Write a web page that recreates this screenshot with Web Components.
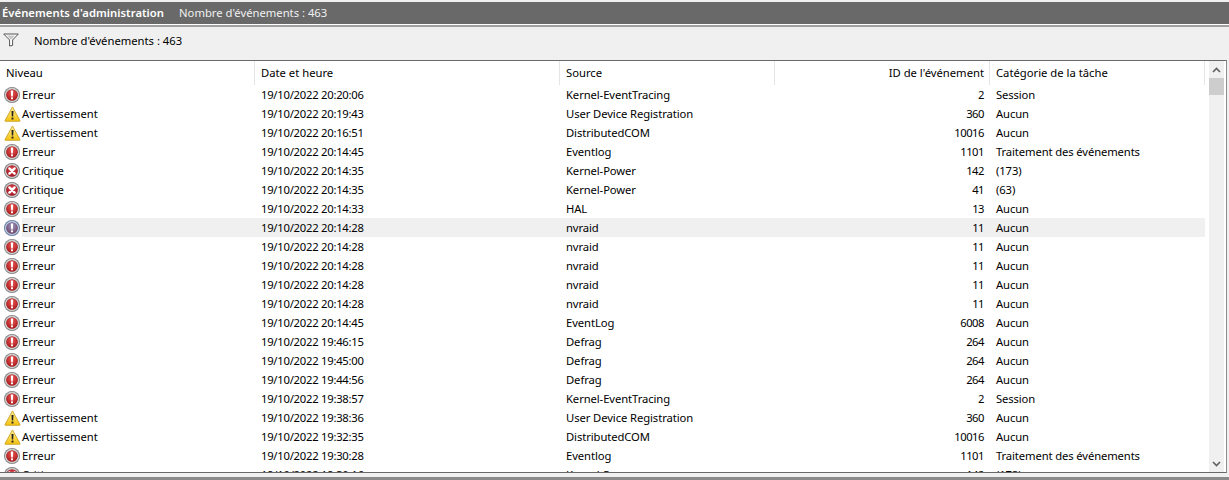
<!DOCTYPE html>
<html lang="fr"><head><meta charset="utf-8"><title>Événements d'administration</title>
<style>
html,body{margin:0;padding:0;height:480px;overflow:hidden;background:#f0f0f0}
body{font:11.25px/16px "Noto Sans","Open Sans",sans-serif;color:#000}
</style></head><body>
<ev-app></ev-app>
<script>
const body=(c1,c2,c3,c4)=>`<circle cx="8" cy="8" r="8" fill="${c1}"/><circle cx="8" cy="8" r="7.2" fill="${c2}"/><circle cx="8" cy="8" r="5.6" fill="${c3}"/><circle cx="8" cy="8" r="5.6" fill="${c4}"/>`;
const ICONS={
E:`<svg viewBox="0 0 16 16" width="16" height="16"><defs><radialGradient id="r" cx=".5" cy=".35" r=".7"><stop offset="0" stop-color="#ec5a58"/><stop offset="1" stop-color="#a51216"/></radialGradient></defs>${body("#7f7f7f","#cfcfcf","#8a1114","url(#r)")}<path d="M6.8 3.5h2.4l-.4 5.9H7.2z" fill="#fff"/><rect x="7" y="10.3" width="2" height="2" rx=".6" fill="#fff"/></svg>`,
S:`<svg viewBox="0 0 16 16" width="16" height="16"><defs><radialGradient id="s" cx=".5" cy=".35" r=".7"><stop offset="0" stop-color="#9a9ac0"/><stop offset="1" stop-color="#6f3f62"/></radialGradient></defs>${body("#64779b","#b6c5de","#5a3a60","url(#s)")}<path d="M6.8 3.5h2.4l-.4 5.9H7.2z" fill="#fff"/><rect x="7" y="10.3" width="2" height="2" rx=".6" fill="#fff"/></svg>`,
C:`<svg viewBox="0 0 16 16" width="16" height="16"><defs><radialGradient id="c" cx=".5" cy=".35" r=".7"><stop offset="0" stop-color="#dc444b"/><stop offset="1" stop-color="#9c1420"/></radialGradient></defs>${body("#7a7a7a","#c9c9c9","#8a1114","url(#c)")}<path d="M5.4 5.4 10.6 10.6M10.6 5.4 5.4 10.6" stroke="#fff" stroke-width="2.4" stroke-linecap="round"/></svg>`,
W:`<svg viewBox="0 0 16 16" width="17" height="16"><defs><linearGradient id="w" x1="0" y1="0" x2="0" y2="1"><stop offset="0" stop-color="#fff09a"/><stop offset="1" stop-color="#f3c20f"/></linearGradient></defs><path d="M8 .9 15.5 14.6Q15.6 15.3 15 15.3H1Q.4 15.3.5 14.6Z" fill="url(#w)" stroke="#c59a18" stroke-width=".8" stroke-linejoin="round"/><path d="M7 5h2l-.3 5.6H7.3z" fill="#222"/><rect x="7.05" y="11.6" width="1.9" height="1.9" fill="#222"/></svg>`
};
const def=(n,css,html)=>{class K extends HTMLElement{connectedCallback(){if(this.shadowRoot)return;const r=this.attachShadow({mode:"open"});r.innerHTML=`<style>${css}</style>`+(typeof html==="function"?html(this):html);}}customElements.define(n,K);};

def("ev-titlebar",`:host{display:flex;align-items:center;height:22px;margin-top:2px;background:#696969;color:#fff;white-space:nowrap;padding-left:2px}
b{font-weight:600;color:#fff;margin-right:15px;letter-spacing:.04px}span{color:#f0f0f0}`,
`<b><slot name="title"></slot></b><span><slot name="count"></slot></span>`);

def("ev-toolbar",`:host{display:flex;align-items:flex-start;height:33px;box-sizing:border-box;background:#f0f0f0;padding:6px 0 0 3px;gap:15px;white-space:nowrap}
svg{display:block;margin-top:0}span{line-height:16px}`,
`<svg width="16" height="14" viewBox="0 0 16 14"><path d="M.7 1h14.6L9.6 7v5.4L6.6 13V7z" fill="#fff" stroke="#555" stroke-width="1" stroke-linejoin="round"/><path d="M4 2.4h8L8.9 6.2H7.2z" fill="#c9c9c9"/></svg><span><slot></slot></span>`);

def("ev-icon",`:host{display:block;width:18px;height:16px;flex:none}svg{display:block}`,h=>ICONS[h.getAttribute("kind")]);

const cols="grid-template-columns:255px 305px 215px 215px 215px;";
def("ev-head",`:host{display:grid;${cols}height:24px;flex:none;background:#fff}
div{padding:4px 6px 0;border-right:1px solid #e5e5e5;box-sizing:border-box;white-space:nowrap;height:24px}
.r{text-align:right;padding-right:5px}`,
`<div>Niveau</div><div>Date et heure</div><div>Source</div><div class="r">ID de l'événement</div><div>Catégorie de la tâche</div>`);

def("ev-row",`:host{display:grid;${cols}height:19px;flex:none;white-space:nowrap;line-height:19px}
.c{padding-left:6px;overflow:hidden}
.l{display:flex;align-items:center;padding-left:4px}
.l span{flex:1;height:19px}
.d{letter-spacing:-.25px}
.s{letter-spacing:-.09px}
.t{letter-spacing:-.12px}
.r{text-align:right;padding-right:6px;letter-spacing:-.5px}
:host([sel]) .c:not(.l),:host([sel]) .l span{background:#f0f0f0}`,
h=>{const a=h.dataset;const names={E:"Erreur",S:"Erreur",W:"Avertissement",C:"Critique"};
return `<div class="c l"><ev-icon kind="${a.k}"></ev-icon><span>${names[a.k]}</span></div><div class="c d">${a.d}</div><div class="c s">${a.s}</div><div class="c r">${a.i}</div><div class="c t">${a.t}</div>`});

def("ev-scroll",`:host{display:flex;flex-direction:column;width:15px;flex:none;background:#f0f0f0;margin-left:4px}
.b{height:16px;display:flex;align-items:center;justify-content:center;flex:none}
.u{height:17px}
.h{height:17px;background:#cdcdcd;flex:none}.f{flex:1}`,
`<div class="b u"><svg width="9" height="6" viewBox="0 0 9 6"><path d="M1 5 4.5 1.5 8 5" fill="none" stroke="#606060" stroke-width="1.6"/></svg></div><div class="h"></div><div class="f"></div><div class="b"><svg width="9" height="6" viewBox="0 0 9 6"><path d="M1 1 4.5 4.5 8 1" fill="none" stroke="#606060" stroke-width="1.6"/></svg></div>`);

const D=[
["E","19/10/2022 20:20:06","Kernel-EventTracing","2","Session"],
["W","19/10/2022 20:19:43","User Device Registration","360","Aucun"],
["W","19/10/2022 20:16:51","DistributedCOM","10016","Aucun"],
["E","19/10/2022 20:14:45","Eventlog","1101","Traitement des événements"],
["C","19/10/2022 20:14:35","Kernel-Power","142","(173)"],
["C","19/10/2022 20:14:35","Kernel-Power","41","(63)"],
["E","19/10/2022 20:14:33","HAL","13","Aucun"],
["S","19/10/2022 20:14:28","nvraid","11","Aucun"],
["E","19/10/2022 20:14:28","nvraid","11","Aucun"],
["E","19/10/2022 20:14:28","nvraid","11","Aucun"],
["E","19/10/2022 20:14:28","nvraid","11","Aucun"],
["E","19/10/2022 20:14:28","nvraid","11","Aucun"],
["E","19/10/2022 20:14:45","EventLog","6008","Aucun"],
["E","19/10/2022 19:46:15","Defrag","264","Aucun"],
["E","19/10/2022 19:45:00","Defrag","264","Aucun"],
["E","19/10/2022 19:44:56","Defrag","264","Aucun"],
["E","19/10/2022 19:38:57","Kernel-EventTracing","2","Session"],
["W","19/10/2022 19:38:36","User Device Registration","360","Aucun"],
["W","19/10/2022 19:32:35","DistributedCOM","10016","Aucun"],
["E","19/10/2022 19:30:28","Eventlog","1101","Traitement des événements"],
["C","19/10/2022 19:30:16","Kernel-Power","142","(173)"]];
def("ev-table",`:host{display:flex;height:413px;box-sizing:border-box;background:#fff;border-top:1px solid #696969;border-bottom:1px solid #696969;border-right:1px solid #8c8c8c;margin-right:2px;overflow:hidden}
.m{width:1205px;flex:none;display:flex;flex-direction:column;overflow:hidden}`,
`<div class="m"><ev-head></ev-head>${D.map((r,i)=>`<ev-row ${i==7?"sel":""} data-k="${r[0]}" data-d="${r[1]}" data-s="${r[2]}" data-i="${r[3]}" data-t="${r[4]}"></ev-row>`).join("")}</div><ev-scroll></ev-scroll>`);

def("ev-app",`:host{display:block;width:1229px;height:480px;background:#f0f0f0;overflow:hidden}
.w{height:1px;background:#fff}.a{height:2px;background:#a0a0a0}
.foot{height:4px;background:#f0f0f0}
.g{height:3px;background:#8a8a8a}`,
`<ev-titlebar><span slot="title">Événements d'administration</span><span slot="count">Nombre d'événements : 463</span></ev-titlebar>
<div class="w"></div><div class="a"></div>
<ev-toolbar>Nombre d'événements : 463</ev-toolbar>
<ev-table></ev-table>
<div class="foot"></div><div class="g"></div>`);
</script>
</body></html>
